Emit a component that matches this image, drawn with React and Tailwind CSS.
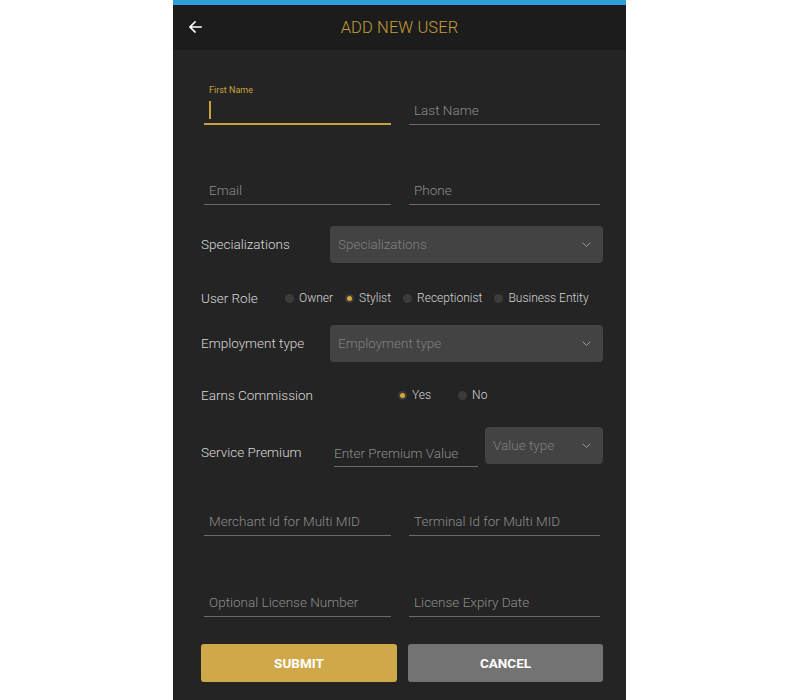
import React from "react";

const font = { fontFamily: "Roboto, 'Noto Sans', sans-serif" };

function Field({ label, placeholder, focused, width }) {
  return (
    <div className={`${width} flex flex-col`}>
      <div className="h-[14px] pl-[5px] text-[9px] leading-[14px] text-[#c9a23a]">{focused ? label : ""}</div>
      {focused ? (
        <div className="flex h-[28px] items-center border-b-2 border-[#c9a23a] pl-[5px]">
          <div className="h-[18px] w-[2px] bg-[#c9a23a]" />
        </div>
      ) : (
        <div className="flex h-[28px] items-center border-b border-[#6a6a6a] pl-[5px] text-[13.5px] font-light text-[#8c8c8c]">
          {placeholder}
        </div>
      )}
    </div>
  );
}

function Chevron() {
  return (
    <svg width="9" height="6" viewBox="0 0 9 6" fill="none">
      <path d="M1 1l3.5 3.5L8 1" stroke="#9a9a9a" strokeWidth="1" strokeLinecap="round" strokeLinejoin="round" />
    </svg>
  );
}

function Select({ placeholder, className }) {
  return (
    <div className={`flex h-[37px] items-center justify-between rounded-[4px] bg-[#434343] pl-[8px] pr-[12px] ${className}`}>
      <span className="text-[13.5px] font-light text-[#808080]">{placeholder}</span>
      <Chevron />
    </div>
  );
}

function Radio({ label, checked }) {
  return (
    <div className="flex items-center gap-[5px]">
      <div className="flex h-[9px] w-[9px] items-center justify-center rounded-full bg-[#3b3b3b]">
        {checked && <div className="h-[5px] w-[5px] rounded-full bg-[#d4a63c]" />}
      </div>
      <span className="text-[12px] font-light text-[#d4d4d4]">{label}</span>
    </div>
  );
}

export default function App() {
  return (
    <div className="flex min-h-[700px] w-full bg-white pl-[173px]" style={font}>
      <div className="flex w-[453px] flex-col">
        <div className="h-[5px] bg-[#2e9fd9]" />
        <div className="relative flex h-[45px] items-center justify-center bg-[#1c1c1c]">
          <svg className="absolute left-[16px] top-[16px]" width="13" height="12" viewBox="0 0 13 12" fill="none">
            <path d="M12 6H1.5M6 1L1 6l5 5" stroke="#ffffff" strokeWidth="1.6" strokeLinecap="square" />
          </svg>
          <span className="mt-[2px] text-[16.5px] font-light tracking-[0.1px] text-[#c59c38]">ADD NEW USER</span>
        </div>
        <div className="flex h-[650px] flex-col bg-[#242424] pl-[28px] pr-[23px]">
          <div className="mt-[33px] flex px-[3px]">
            <Field label="First Name" focused width="w-[187px]" />
            <div className="w-[18px]" />
            <Field placeholder="Last Name" width="w-[191px]" />
          </div>
          <div className="mt-[38px] flex px-[3px]">
            <Field placeholder="Email" width="w-[187px]" />
            <div className="w-[18px]" />
            <Field placeholder="Phone" width="w-[191px]" />
          </div>
          <div className="mt-[21px] flex items-center">
            <span className="w-[129px] text-[13.5px] font-light text-[#d8d8d8]">Specializations</span>
            <Select placeholder="Specializations" className="flex-1" />
          </div>
          <div className="mt-[25px] flex h-[20px] items-center">
            <span className="w-[84px] text-[13.5px] font-light text-[#d8d8d8]">User Role</span>
            <div className="flex items-center gap-[12px]">
              <Radio label="Owner" />
              <Radio label="Stylist" checked />
              <Radio label="Receptionist" />
              <Radio label="Business Entity" />
            </div>
          </div>
          <div className="mt-[17px] flex items-center">
            <span className="w-[129px] text-[13.5px] font-light text-[#d8d8d8]">Employment type</span>
            <Select placeholder="Employment type" className="flex-1" />
          </div>
          <div className="mt-[23px] flex h-[20px] items-center">
            <span className="w-[197px] text-[13.5px] font-light text-[#d8d8d8]">Earns Commission</span>
            <Radio label="Yes" checked />
            <div className="w-[27px]" />
            <Radio label="No" />
          </div>
          <div className="mt-[22px] flex h-[40px]">
            <span className="mt-[16px] w-[133px] text-[13.5px] font-light leading-[18px] text-[#d8d8d8]">Service Premium</span>
            <div className="flex h-[40px] w-[144px] items-end">
              <div className="flex h-[26px] w-full items-center border-b border-[#6a6a6a] text-[13.5px] font-light text-[#8c8c8c]">
                Enter Premium Value
              </div>
            </div>
            <div className="w-[7px]" />
            <Select placeholder="Value type" className="w-[118px]" />
          </div>
          <div className="mt-[27px] flex px-[3px]">
            <Field placeholder="Merchant Id for Multi MID" width="w-[187px]" />
            <div className="w-[18px]" />
            <Field placeholder="Terminal Id for Multi MID" width="w-[191px]" />
          </div>
          <div className="mt-[39px] flex px-[3px]">
            <Field placeholder="Optional License Number" width="w-[187px]" />
            <div className="w-[18px]" />
            <Field placeholder="License Expiry Date" width="w-[191px]" />
          </div>
          <div className="mt-[27px] flex">
            <button className="flex h-[38px] w-[196px] items-center justify-center rounded-[3px] bg-[#cfa84a] text-[13.5px] font-bold text-white">
              SUBMIT
            </button>
            <div className="w-[11px]" />
            <button className="flex h-[38px] w-[195px] items-center justify-center rounded-[3px] bg-[#737373] text-[13.5px] font-bold text-white">
              CANCEL
            </button>
          </div>
        </div>
      </div>
    </div>
  );
}
